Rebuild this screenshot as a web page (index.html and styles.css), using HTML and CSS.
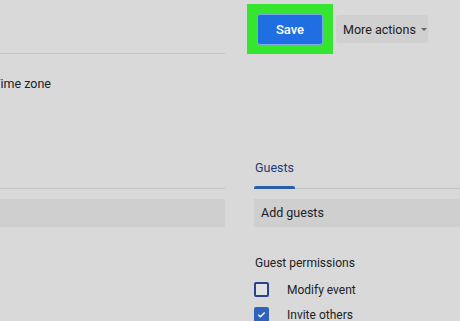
FILE: index.html
```html
<!DOCTYPE html>
<html lang="en">
<head>
  <meta charset="UTF-8">
  <meta name="viewport" content="width=device-width, initial-scale=1.0">
  <title>Event details</title>
  <link rel="stylesheet" href="styles.css">
</head>
<body>
  <div class="page">
    <div class="left-col">
      <div class="left-head"></div>
      <div class="tz">Time zone</div>
      <div class="left-sep"></div>
      <div class="left-field"></div>
    </div>
    <div class="right-col">
      <div class="toolbar">
        <div class="highlight">
          <button class="btn-save">Save</button>
        </div>
        <button class="btn-more">More actions <span class="caret"></span></button>
      </div>
      <div class="tabs">
        <div class="tab active">Guests</div>
      </div>
      <div class="field">Add guests</div>
      <div class="perm-title">Guest permissions</div>
      <label class="perm"><span class="check"></span>Modify event</label>
      <label class="perm"><span class="check on"><svg viewBox="0 0 14 14" width="14" height="14"><path d="M3 7.2l2.6 2.6L11 4.4" fill="none" stroke="#fff" stroke-width="1.8"/></svg></span>Invite others</label>
    </div>
  </div>
</body>
</html>
```

FILE: styles.css
```css
body { margin: 0; background: #d9d9d9; font-family: Roboto, "Liberation Sans", sans-serif; color: #202124; width: 460px; height: 321px; overflow: hidden; }
.page { display: grid; grid-template-columns: 225px 1fr; column-gap: 29px; }

.left-head { height: 53px; border-bottom: 1px solid #c4c4c4; }
.tz { margin: 23px 0 0 -7px; font-size: 12.5px; line-height: 14px; }
.left-sep { height: 97px; border-bottom: 1px solid #c4c4c4; }
.left-field { margin-top: 10px; height: 28px; background: #cfcfd0; }

.toolbar { display: flex; align-items: flex-start; height: 54px; }
.highlight { margin: 4px 0 0 -7px; padding: 10px 10px 9px 10px; background: #36e52f; }
.btn-save { display: block; width: 66px; height: 31px; border: 1px solid #7aa6ea; border-radius: 3px; background: #1f6fe3; color: #fff; font: 500 13px Roboto, "Liberation Sans", sans-serif; }
.btn-more { margin: 15px 0 0 3px; height: 28px; width: 92px; padding: 0 0 0 7px; border: 0; border-radius: 3px; background: #d0d0d0; color: #202124; font: 12.5px Roboto, "Liberation Sans", sans-serif; text-align: left; display: flex; align-items: center; }
.caret { margin-left: 5px; border-left: 3px solid transparent; border-right: 3px solid transparent; border-top: 3px solid #666; }

.tabs { margin-top: 107px; border-bottom: 1px solid #c2c2c2; display: flex; }
.tab { position: relative; font-size: 12.5px; line-height: 14px; padding: 0 1px 13px 1px; color: #1d3a78; }
.tab.active::after { content: ""; position: absolute; left: 0; right: 0; bottom: -1px; height: 3px; background: #2c5ea6; border-radius: 2px 2px 0 0; }
.field { margin-top: 10px; height: 28px; background: #cfcfd0; font-size: 12.5px; line-height: 28px; padding-left: 7px; }

.perm-title { margin-top: 29px; font-size: 12px; line-height: 14px; padding-left: 1px; }
.perm { display: flex; align-items: center; height: 25px; font-size: 12px; }
.perm:first-of-type { margin-top: 7px; }
.check { box-sizing: border-box; width: 15px; height: 15px; margin-right: 18px; border: 2px solid #27438a; border-radius: 2px; background: #e2e2e4; display: flex; align-items: center; justify-content: center; }
.check.on { background: #2f63b9; border-color: #2f63b9; }
.check svg { width: 11px; height: 11px; }
```
